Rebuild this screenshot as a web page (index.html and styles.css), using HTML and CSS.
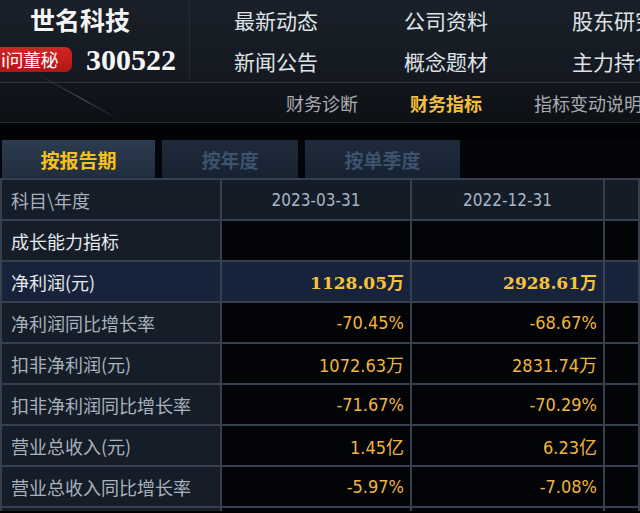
FILE: index.html
```html
<!DOCTYPE html>
<html lang="zh">
<head>
<meta charset="utf-8">
<link rel="stylesheet" href="styles.css">
</head>
<body>
<div class="page">
  <header class="top">
    <div class="brand">
      <div class="name">世名科技</div>
      <div class="code-row">
        <span class="badge">i问董秘</span>
        <span class="code">300522</span>
      </div>
    </div>
    <nav class="nav">
      <span>最新动态</span><span>公司资料</span><span>股东研究</span>
      <span>新闻公告</span><span>概念题材</span><span>主力持仓</span>
    </nav>
  </header>
  <div class="subnav">
    <span class="sub">财务诊断</span>
    <span class="sub active">财务指标</span>
    <span class="sub">指标变动说明</span>
  </div>
  <div class="streak"></div>
  <div class="band"></div>
  <div class="tabs">
    <div class="tab on">按报告期</div>
    <div class="tab t2">按年度</div>
    <div class="tab t3">按单季度</div>
  </div>
  <div class="grid">
    <div class="c lab head">科目\年度</div>
    <div class="c date head">2023-03-31</div>
    <div class="c date head">2022-12-31</div>
    <div class="c head"></div>

    <div class="c lab bright">成长能力指标</div>
    <div class="c"></div><div class="c"></div><div class="c"></div>

    <div class="c lab bright hl">净利润(元)</div>
    <div class="c num big hl">1128.05万</div>
    <div class="c num big hl">2928.61万</div>
    <div class="c hl"></div>

    <div class="c lab">净利润同比增长率</div>
    <div class="c num">-70.45%</div>
    <div class="c num">-68.67%</div>
    <div class="c"></div>

    <div class="c lab">扣非净利润(元)</div>
    <div class="c num">1072.63万</div>
    <div class="c num">2831.74万</div>
    <div class="c"></div>

    <div class="c lab">扣非净利润同比增长率</div>
    <div class="c num">-71.67%</div>
    <div class="c num">-70.29%</div>
    <div class="c"></div>

    <div class="c lab">营业总收入(元)</div>
    <div class="c num">1.45亿</div>
    <div class="c num">6.23亿</div>
    <div class="c"></div>

    <div class="c lab">营业总收入同比增长率</div>
    <div class="c num">-5.97%</div>
    <div class="c num">-7.08%</div>
    <div class="c"></div>

    <div class="c lab"></div>
    <div class="c"></div><div class="c"></div><div class="c"></div>
  </div>
</div>
</body>
</html>
```

FILE: styles.css
```css
* { box-sizing: border-box; }
html, body { margin: 0; padding: 0; background: #000; }
body {
  width: 640px; height: 513px; overflow: hidden;
  font-family: "Noto Sans CJK SC", "Noto Sans", sans-serif;
}
.page { width: 640px; position: relative; }

.top {
  height: 83px;
  display: flex;
  background: linear-gradient(180deg, #1a2029 0%, #141920 100%);
  border-bottom: 1px solid #2c333d;
  overflow: hidden;
}
.brand {
  flex: none;
  width: 190px;
  border-right: 1px solid #252b33;
  height: 80px;
}
.name {
  color: #f4f4f4;
  font-size: 25px;
  font-weight: 700;
  line-height: 36px;
  padding-left: 30px;
  padding-top: 1px;
}
.code-row {
  display: flex;
  align-items: center;
  margin-top: 10px;
  gap: 14px;
}
.badge {
  display: block;
  flex: none;
  width: 72px;
  height: 25px;
  line-height: 24px;
  background: linear-gradient(180deg, #d42424 0%, #b01616 100%);
  border-radius: 0 7px 7px 0;
  color: #fff;
  font-size: 18px;
  padding-left: 1px;
  white-space: nowrap;
  letter-spacing: -0.5px;
}
.code {
  color: #f6f6f6;
  font-family: "Liberation Serif", serif;
  font-weight: 700;
  font-size: 30px;
  line-height: 25px;
}
.nav {
  flex: none;
  display: grid;
  grid-template-columns: 170px 168px 200px;
  grid-auto-rows: 41px;
  padding-left: 44px;
  padding-top: 1px;
  white-space: nowrap;
}
.nav span {
  color: #dfe3e8;
  font-size: 21px;
  line-height: 38px;
}
.streak {
  position: absolute;
  left: 38px; top: 74px;
  width: 92px; height: 1px;
  background: linear-gradient(90deg, rgba(120,140,170,0) 0%, rgba(130,150,180,0.5) 55%, rgba(120,140,170,0) 100%);
  transform: rotate(29deg);
  transform-origin: left center;
}

.subnav {
  height: 40px;
  display: flex;
  align-items: center;
  background: linear-gradient(180deg, #12161c 0%, #0d1116 100%);
  border-bottom: 1px solid #262c35;
  padding-left: 286px;
  white-space: nowrap;
  overflow: hidden;
}
.sub {
  color: #a8abaf;
  font-size: 18px;
  line-height: 24px;
  margin-right: 52px;
  flex: none;
}
.sub.active { color: #f0bf3c; font-weight: 700; }

.band { height: 17px; background: #020306; }

.tabs {
  display: flex;
  gap: 7px;
  height: 38px;
  padding-left: 2px;
  background: #03050a;
}
.tab {
  height: 38px;
  display: flex;
  align-items: center;
  justify-content: center;
  font-size: 19px;
  font-weight: 700;
  color: #3d526c;
  background: linear-gradient(180deg, #1f2b3b 0%, #172231 100%);
}
.tab.on {
  width: 153px;
  color: #f6c21a;
  background: linear-gradient(180deg, #2c3b4f 0%, #202d3e 100%);
}
.tab.t2 { width: 136px; }
.tab.t3 { width: 155px; }

.grid {
  display: grid;
  grid-template-columns: 218px 188px 191px 33px;
  grid-template-rows: repeat(9, 39px);
  gap: 2px;
  padding: 2px 0 0 2px;
  background: #36404e;
  width: 640px;
  height: 333px;
  overflow: hidden;
}
.c {
  background: #030407;
  display: flex;
  align-items: center;
  white-space: nowrap;
}
.c.head { background: #141c28; }
.c.lab {
  background: #151d29;
  color: #a9b2bc;
  font-size: 18px;
  padding-left: 9px;
}
.c.lab.bright { color: #e6e8ec; }
.c.hl { background: #17233a; }
.c.lab.hl { background: #17233a; }
.c.date {
  justify-content: center;
  font-family: "DejaVu Sans Condensed", "DejaVu Sans", sans-serif;
  font-size: 17px;
  color: #aab5c3;
}
.c.num {
  justify-content: flex-end;
  padding-right: 6px;
  font-family: "DejaVu Sans Condensed", "DejaVu Sans", "Noto Sans CJK SC", sans-serif;
  font-size: 18px;
  color: #efb43e;
}
.c.num.big {
  font-family: "DejaVu Serif", "Noto Sans CJK SC", serif;
  font-weight: 700;
  font-size: 17px;
  color: #f5c23e;
}
```
